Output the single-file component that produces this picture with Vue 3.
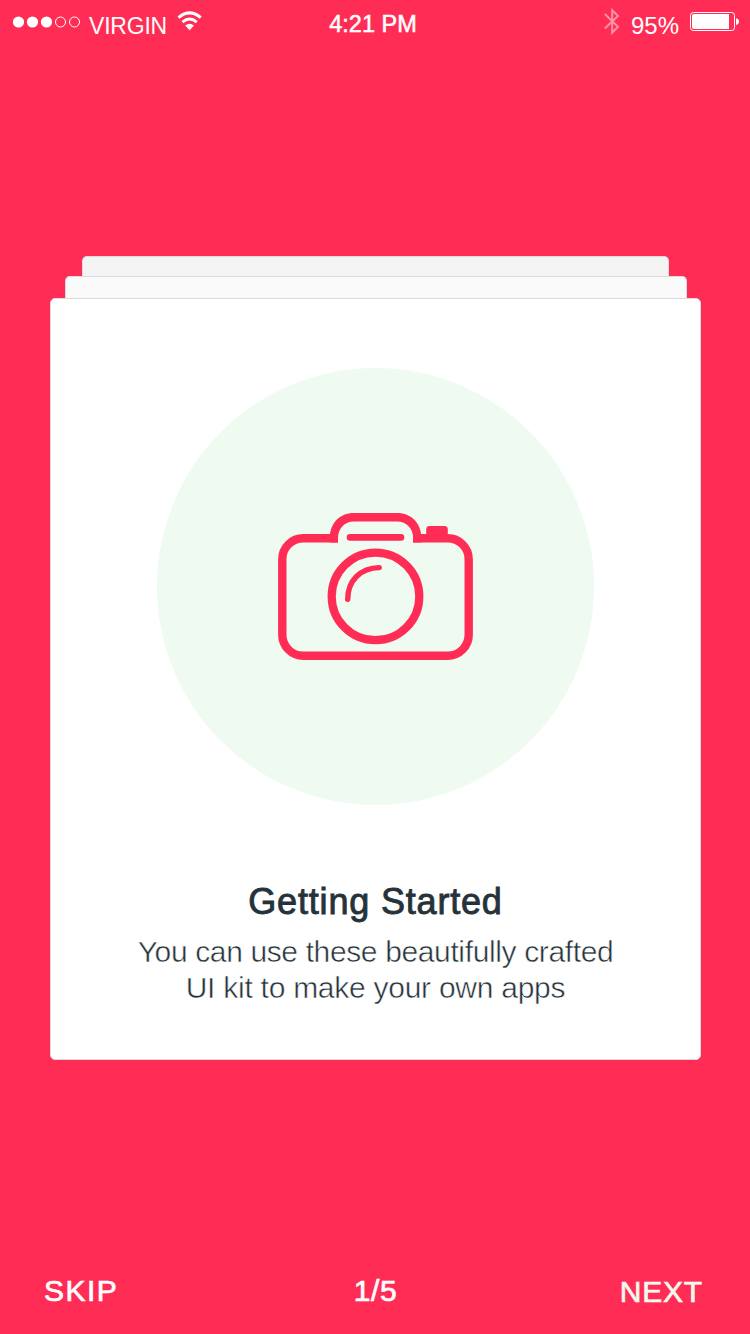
<script setup>
const signal = [true, true, true, false, false]
const lines = [
  { text: 'You can use these beautifully crafted', cls: 'first' },
  { text: 'UI kit to make your own apps', cls: 'second' },
]
</script>

<template>
  <main class="screen">
    <header class="status">
      <div class="left">
        <svg class="dots" width="70" height="14" viewBox="0 0 70 14">
          <template v-for="(on, i) in signal" :key="i">
            <circle v-if="on" :cx="6.5 + i * 14" cy="7" r="5.6" fill="#fff" />
            <circle v-else :cx="6.5 + i * 14" cy="7" r="5" fill="none" stroke="#fff" />
          </template>
        </svg>
        <span class="carrier">VIRGIN</span>
        <svg class="wifi" width="26" height="20" viewBox="0 0 26 20">
          <path d="M1.5 6.6Q12.6-2.8 23.7 6.6" fill="none" stroke="#fff" stroke-width="3" />
          <path d="M5.4 11.1Q12.6 4.9 19.8 11.1" fill="none" stroke="#fff" stroke-width="2.8" />
          <path d="M8.2 14.6Q12.6 11 17 14.6L12.6 19.2Z" fill="#fff" />
        </svg>
      </div>
      <span class="time">4:21 PM</span>
      <div class="right">
        <svg class="bluetooth" width="18" height="28" viewBox="0 0 18 28">
          <path d="M1.8 6L15 18.8L9.2 24.8V2.2L15 8L1.8 20.4" fill="none" stroke="#ff91a7" stroke-width="2" />
        </svg>
        <span class="percent">95%</span>
        <svg class="battery" width="50" height="20" viewBox="0 0 50 20">
          <rect x=".5" y=".5" width="44" height="18" rx="2.8" fill="none" stroke="#fff" />
          <path d="M4 2H39V17H4Q2 17 2 15V4Q2 2 4 2Z" fill="#fff" />
          <path d="M46 6.3Q49 7 49 9.6T46 13Z" fill="#fff" />
        </svg>
      </div>
    </header>

    <section class="deck">
      <div class="sheet back"></div>
      <div class="sheet middle"></div>
      <article class="card">
        <div class="disc">
          <svg width="220" height="170" viewBox="0 0 220 170" fill="none" stroke="#ff2d55">
            <path d="M73 38.2H38.3A21 21 0 0 0 17.3 59.2V134.8A21 21 0 0 0 38.3 155.8H182.7A21 21 0 0 0 203.7 134.8V59.2A21 21 0 0 0 182.7 38.2H148" stroke-width="8.4" />
            <path d="M64.8 38C64.8 23.5 74.5 13 89 13H132C146.500 13 156.400 23.500 156.400 38V42.400H148.200V38C148.200 28.500 141.500 21.400 132 21.400H89C79.500 21.400 73 28.500 73 38V42.400H64.800Z" fill="#ff2d55" stroke="none" />
            <path d="M85 37.4H136" stroke-width="6.6" stroke-linecap="round" />
            <path d="M161.2 36V29.4Q161.2 26 164.6 26H179.4Q182.8 26 182.8 29.4V36Z" fill="#ff2d55" stroke="none" />
            <circle cx="110.5" cy="96.4" r="43.8" stroke-width="8.2" />
            <path d="M82.7 99.3C82.7 80.5 95.5 67.9 114.2 67.6" stroke-width="5.4" stroke-linecap="round" />
          </svg>
        </div>
        <h1>Getting Started</h1>
        <p>
          <span v-for="l in lines" :key="l.cls" :class="l.cls">{{ l.text }}</span>
        </p>
      </article>
    </section>

    <footer class="actions">
      <span class="skip">SKIP</span>
      <span class="page">1/5</span>
      <span class="next">NEXT</span>
    </footer>
  </main>
</template>

<style>
body {
  margin: 0;
}
</style>

<style scoped>
.screen {
  box-sizing: border-box;
  width: 750px;
  height: 1334px;
  display: flex;
  flex-direction: column;
  background: #ff2d55;
  color: #fff;
  font-family: "Liberation Sans", Arial, sans-serif;
  overflow: hidden;
}
svg {
  display: block;
  flex: none;
}
.status {
  height: 50px;
  display: grid;
  grid-template-columns: 1fr auto 1fr;
  align-items: start;
  white-space: nowrap;
}
.left,
.right {
  display: flex;
  align-items: flex-start;
}
.dots {
  margin: 14.5px 0 0 12px;
}
.carrier {
  margin: 13px 0 0 7px;
  font-size: 23px;
  line-height: 26px;
  letter-spacing: -0.2px;
}
.wifi {
  margin: 11px 0 0 10px;
}
.time {
  margin: 11px 4px 0 0;
  font-size: 23.5px;
  line-height: 26px;
  -webkit-text-stroke: 0.5px #fff;
}
.right {
  justify-content: flex-end;
}
.bluetooth {
  margin-top: 8px;
}
.percent {
  margin: 13px 0 0 10px;
  font-size: 24px;
  line-height: 26px;
}
.battery {
  margin: 12px 10px 0 11px;
}
.deck {
  margin-top: 206px;
  display: flex;
  flex-direction: column;
  align-items: flex-start;
}
.sheet,
.card {
  box-sizing: border-box;
  border: 1px solid #dcdcdc;
  border-radius: 5px;
}
.sheet {
  border-bottom: 0;
  border-radius: 5px 5px 0 0;
}
.back {
  width: 587px;
  height: 20px;
  margin-left: 82px;
  background: #f4f4f4;
}
.middle {
  width: 622px;
  height: 22px;
  margin-left: 65px;
  background: #fafafa;
}
.card {
  width: 651px;
  height: 762px;
  margin-left: 50px;
  padding-top: 69px;
  display: flex;
  flex-direction: column;
  align-items: center;
  background: #fff;
  color: #26323a;
  white-space: nowrap;
}
.disc {
  width: 437px;
  height: 437px;
  flex: none;
  display: flex;
  align-items: center;
  justify-content: center;
  border-radius: 50%;
  background: #effaf1;
}
.disc svg {
  margin: 0 1px 3px 0;
}
h1 {
  margin: 77px 0 0;
  font-size: 36px;
  line-height: 40px;
  font-weight: 400;
  letter-spacing: 0.82px;
  -webkit-text-stroke: 0.9px #26323a;
}
p {
  margin: 12px 0 0;
  display: flex;
  flex-direction: column;
  align-items: center;
  font-size: 30px;
  line-height: 36px;
  -webkit-text-stroke: 0.5px #fff;
}
.first {
  letter-spacing: -0.37px;
}
.second {
  letter-spacing: -0.26px;
}
.actions {
  margin-top: auto;
  height: 60px;
  padding: 0 47px 0 44px;
  display: grid;
  grid-template-columns: 1fr auto 1fr;
  align-items: start;
  font-size: 30px;
  line-height: 34px;
  -webkit-text-stroke: 0.7px currentColor;
}
.skip {
  letter-spacing: 1.5px;
}
.page {
  margin-left: 4px;
  letter-spacing: 0.6px;
}
.next {
  justify-self: end;
  margin-top: 1px;
  letter-spacing: 0.8px;
  color: #f1f9ef;
}
</style>
